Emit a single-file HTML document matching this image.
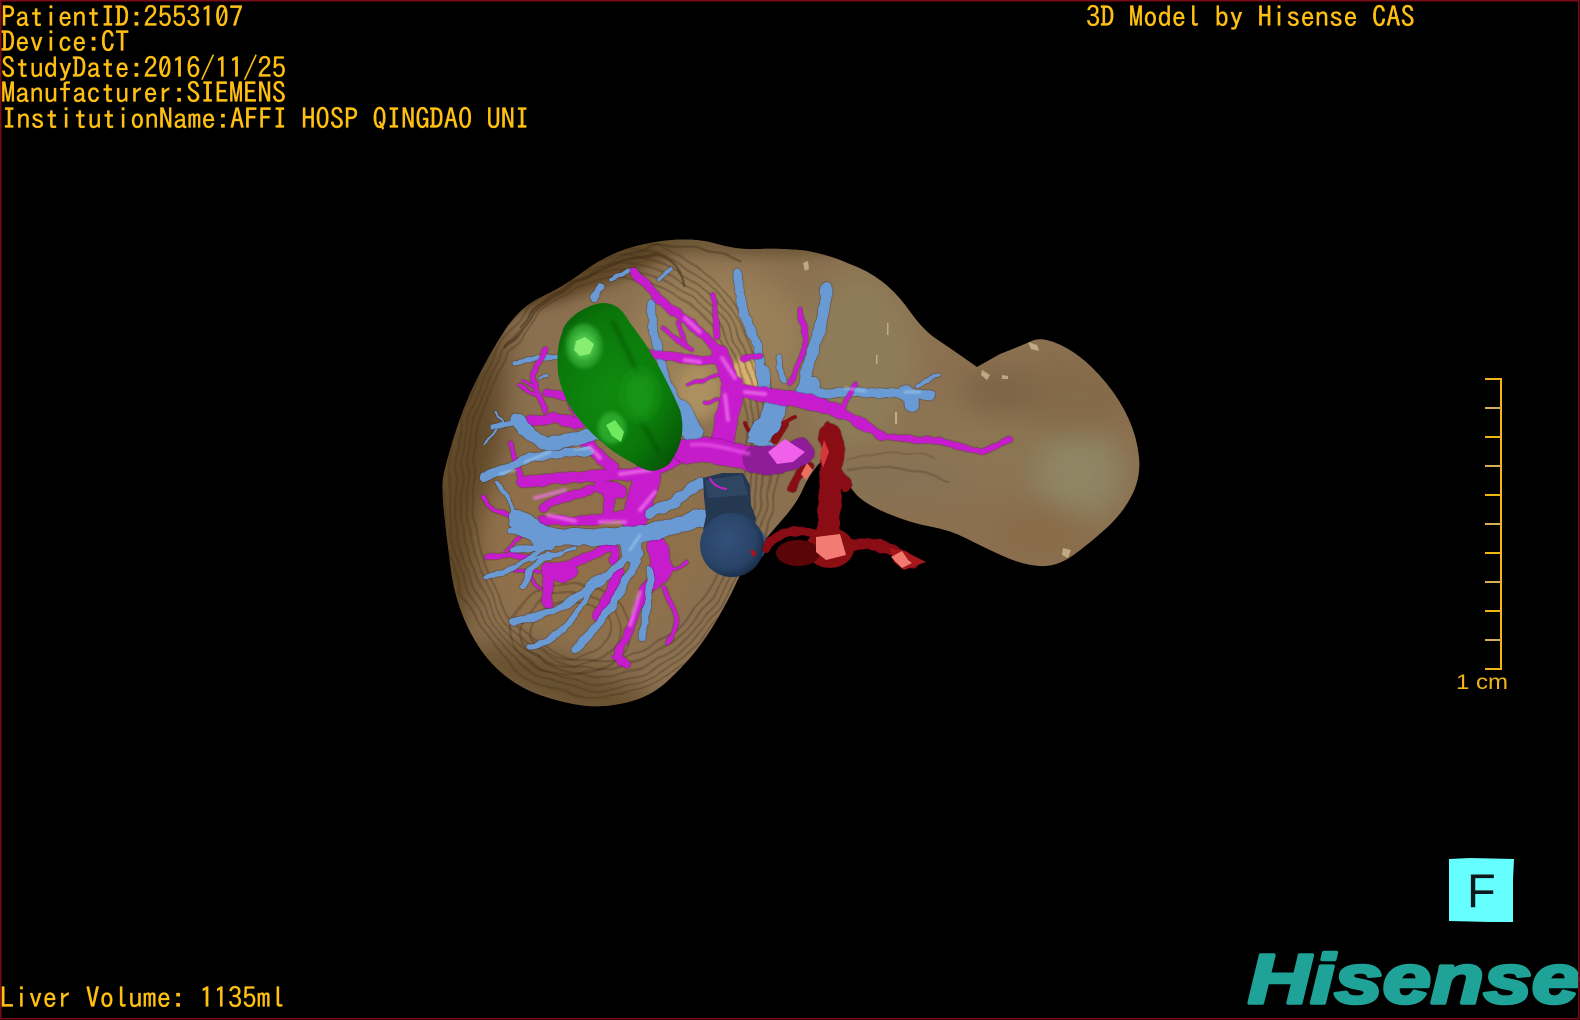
<!DOCTYPE html>
<html><head><meta charset="utf-8"><title>3D Model</title>
<style>
html,body{margin:0;padding:0;background:#000;width:1580px;height:1020px;overflow:hidden}
svg{display:block;position:absolute;left:0;top:0}
.t{font-family:"IPAGothic","Liberation Mono",monospace;font-size:28.5px;fill:#ffc012;stroke:#ffc012;stroke-width:.3px}
.v path{fill:none;stroke-linecap:round;stroke-linejoin:round}
</style></head><body>
<svg width="1580" height="1020" viewBox="0 0 1580 1020" xmlns="http://www.w3.org/2000/svg">
<defs>
<path id="lv" d="M805 250.5Q780 248 758.5 249Q737 250 717 244Q697 238 672 240Q647 242 625 249.5Q603 257 583 272Q563 287 541.5 297Q520 307 505 330Q490 353 476.5 380Q463 407 453 440Q443 473 442.5 483Q442 493 444.5 516.5Q447 540 451 570Q455 600 467.5 626.5Q480 653 498.5 670Q517 687 540 695Q563 703 583 705.5Q603 708 626.5 702.5Q650 697 666.5 682Q683 667 695 652Q707 637 718.5 617Q730 597 736.5 582.5Q743 568 755 552.5Q767 537 782 520Q797 503 802.5 490Q808 477 817 466Q826 455 836.5 469Q847 483 855 493Q863 503 886.5 513Q910 523 930 526.5Q950 530 966.5 538.5Q983 547 1003 556Q1023 565 1040 566Q1057 567 1073.5 555Q1090 543 1106.5 528Q1123 513 1132 495Q1141 477 1139 457Q1137 437 1128.5 418.5Q1120 400 1106.5 383.5Q1093 367 1080 357Q1067 347 1053.5 342Q1040 337 1031.5 341Q1023 345 1000 354L977 367L963.5 357.5Q950 348 936.5 339Q923 330 910 311.5Q897 293 882 281.5Q867 270 848.5 263.5Q830 255 805 250.5Z"/>
<clipPath id="lc"><use href="#lv"/></clipPath>
<filter id="b14" x="-40%" y="-40%" width="180%" height="180%"><feGaussianBlur stdDeviation="14"/></filter>
<filter id="b6" x="-40%" y="-40%" width="180%" height="180%"><feGaussianBlur stdDeviation="6"/></filter>
<filter id="b2" x="-40%" y="-40%" width="180%" height="180%"><feGaussianBlur stdDeviation="2"/></filter>
<filter id="b1" filterUnits="userSpaceOnUse" x="0" y="0" width="1580" height="1020"><feGaussianBlur stdDeviation="1"/></filter>
<filter id="edge" filterUnits="userSpaceOnUse" x="0" y="0" width="1580" height="1020">
<feTurbulence type="fractalNoise" baseFrequency=".08" numOctaves="2" seed="4" result="n"/>
<feDisplacementMap in="SourceGraphic" in2="n" scale="5" xChannelSelector="R" yChannelSelector="G" result="d"/>
<feDropShadow in="d" dx="0" dy="0" stdDeviation="0.8" flood-color="#1a1020" flood-opacity="0.9"/></filter>
<filter id="wav" filterUnits="userSpaceOnUse" x="0" y="0" width="1580" height="1020">
<feTurbulence type="fractalNoise" baseFrequency=".03" numOctaves="2" seed="7" result="n"/>
<feDisplacementMap in="SourceGraphic" in2="n" scale="10" xChannelSelector="R" yChannelSelector="G"/></filter>
<radialGradient id="gr" gradientUnits="userSpaceOnUse" cx="610" cy="390" r="130" gradientTransform="translate(610 390) rotate(30) scale(.75 1.15) translate(-610 -390)">
<stop offset="0" stop-color="#0f8a0f"/><stop offset=".6" stop-color="#0a760a"/><stop offset="1" stop-color="#055005"/></radialGradient>
<radialGradient id="sp" cx=".42" cy=".42" r=".62"><stop offset="0" stop-color="#32507a"/><stop offset=".7" stop-color="#2a4468"/><stop offset="1" stop-color="#182c48"/></radialGradient>
</defs>

<rect width="1580" height="1020" fill="#000"/>

<!-- liver -->
<use href="#lv" fill="#8b7050"/>
<g clip-path="url(#lc)">
<ellipse cx="462" cy="480" rx="34" ry="190" fill="#5e4628" filter="url(#b14)" transform="rotate(8 462 480)"/>
<ellipse cx="560" cy="685" rx="110" ry="26" fill="#66502e" filter="url(#b14)" transform="rotate(18 560 685)"/>
<ellipse cx="600" cy="268" rx="120" ry="18" fill="#5e4628" filter="url(#b6)" transform="rotate(-22 600 268)"/>
<ellipse cx="760" cy="245" rx="110" ry="12" fill="#6e5838" filter="url(#b6)"/>
<ellipse cx="720" cy="340" rx="90" ry="70" fill="#9a8058" filter="url(#b14)"/>
<ellipse cx="590" cy="540" rx="110" ry="100" fill="#8f7048" filter="url(#b14)"/>
<ellipse cx="860" cy="360" rx="60" ry="90" fill="#8e7c58" filter="url(#b14)"/>
<ellipse cx="1000" cy="440" rx="110" ry="55" fill="#8c7452" filter="url(#b14)"/>
<ellipse cx="1080" cy="475" rx="45" ry="45" fill="#908c6a" opacity=".75" filter="url(#b14)"/>
<ellipse cx="1075" cy="395" rx="60" ry="35" fill="#846a48" filter="url(#b14)"/>
<ellipse cx="1040" cy="535" rx="50" ry="24" fill="#8a6c48" filter="url(#b14)"/>
<ellipse cx="900" cy="480" rx="70" ry="20" fill="#857254" filter="url(#b14)"/>
<ellipse cx="1000" cy="392" rx="40" ry="22" fill="#7c6444" filter="url(#b14)"/>
<ellipse cx="745" cy="378" rx="16" ry="20" fill="#d8b070" filter="url(#b2)"/>
<ellipse cx="698" cy="392" rx="22" ry="28" fill="#ac9060" filter="url(#b6)"/>
<g fill="none" stroke="#3e2c16" stroke-opacity=".3" stroke-width="2.2" filter="url(#wav)">
<ellipse cx="610" cy="470" rx="166" ry="228" transform="rotate(8 610 470)"/>
<ellipse cx="610" cy="470" rx="160" ry="221" transform="rotate(8 610 470)"/>
<ellipse cx="610" cy="470" rx="154" ry="214" transform="rotate(8 610 470)"/>
<ellipse cx="610" cy="470" rx="148" ry="207" transform="rotate(8 610 470)"/>
<ellipse cx="610" cy="470" rx="142" ry="200" transform="rotate(8 610 470)"/>
<ellipse cx="610" cy="470" rx="136" ry="193" transform="rotate(8 610 470)"/>
<ellipse cx="570" cy="630" rx="60" ry="45"/><ellipse cx="570" cy="630" rx="50" ry="37"/><ellipse cx="570" cy="630" rx="40" ry="29"/>
<path d="M505 350C540 300 590 270 640 258C670 250 680 270 685 285" stroke-opacity=".5" stroke-width="2.5"/>
<path d="M520 325C560 285 610 262 650 248C690 240 720 255 740 262" stroke-opacity=".4" stroke-width="2.5"/>
<path d="M848 470C880 462 920 470 950 480" stroke-opacity=".25"/>
<path d="M850 460C880 450 910 452 935 458" stroke-opacity=".18"/>
</g>
<g fill="#d8c49c" opacity=".7">
<path d="M1028 342l9 3 2 6-8-2zM982 370l8 5-3 5-6-5zM1063 548l8 2-3 8-6-3zM803 263l5-2 1 8-4 2zM1002 375l6 1 0 3-6 0z"/>
<rect x="887" y="323" width="1.5" height="12"/><rect x="895" y="412" width="2" height="12"/><rect x="876" y="355" width="1.5" height="9"/>
</g>
</g>

<!-- red small behind -->
<g class="v">
<path d="M745 423C748 433 755 437 763 437C772 438 778 432 784 424C788 420 792 418 795 417" stroke="#861014" stroke-width="4"/>
<path d="M775 440L785 424" stroke="#861014" stroke-width="8"/>
</g>

<!-- blue behind -->
<g class="v" stroke="#6a9ad4" filter="url(#edge)">
<path d="M652 303C650 315 652 325 654 333C658 350 662 365 667 380C673 395 680 408 687 420" stroke-width="8"/>
<path d="M681 410L693 434" stroke-width="20"/>
<path d="M737 273L740 295L744 315L757 345L763 383" stroke-width="9"/>
<path d="M763 370L764 392" stroke-width="12"/>
<path d="M826 290C826 300 824 315 818 335C812 352 807 370 803 388" stroke-width="11"/>
<path d="M826 288V298" stroke-width="10"/>
<path d="M778 357L781 370L784 380" stroke-width="5"/>
<path d="M777 402L770 422L760 435" stroke-width="22"/>
<path d="M770 446L750 440" stroke-width="5"/>
<path d="M817 393C830 394 845 391 860 392C875 393 892 394 907 394C918 394 925 395 930 396" stroke-width="9"/>
<path d="M905 392C912 396 912 402 913 405" stroke-width="14"/>
<path d="M918 385L938 375" stroke-width="4"/>
<path d="M812 385L806 392" stroke-width="18"/>
<path d="M558 357L535 358L515 363" stroke-width="5"/>
<path d="M633 270L610 279" stroke-width="3.5"/>
<path d="M601 286L594 298" stroke-width="7"/>
<path d="M670 268L660 280" stroke-width="3.5"/>
<path d="M547 376L540 379" stroke-width="3"/>
</g>

<!-- magenta -->
<g class="v" stroke="#c71fce" filter="url(#edge)">
<path d="M723 437C726 420 732 405 733 387" stroke-width="22"/>
<path d="M733 387C730 372 726 362 720 353C710 341 700 332 690 323C680 315 668 307 657 297C650 288 642 280 633 272" stroke-width="8"/>
<path d="M733 390C729 375 725 365 720 353" stroke-width="16"/>
<path d="M735 390C750 391 765 395 780 397C795 399 815 402 840 412" stroke-width="14"/>
<path d="M840 412C855 422 868 430 883 436C900 440 920 438 940 441C955 445 970 450 983 452C990 448 1000 444 1010 440" stroke-width="6"/>
<path d="M840 412L883 436" stroke-width="9"/>
<path d="M647 353C662 355 675 357 690 360C703 362 712 360 722 357" stroke-width="8"/>
<path d="M713 295C716 310 716 325 717 337" stroke-width="5"/>
<path d="M663 328L675 338L692 350M678 322L686 345" stroke-width="4"/>
<path d="M688 384L705 380L722 372M705 403L718 400" stroke-width="3"/>
<path d="M800 310C803 325 806 335 805 347C800 360 795 370 790 383" stroke-width="5"/>
<path d="M855 385L843 407" stroke-width="4"/>
<path d="M744 358L750 357M754 357L760 356" stroke-width="6"/>
<path d="M677 460C665 466 655 470 643 473C620 476 596 476 573 477C555 479 538 481 523 482" stroke-width="11"/>
<path d="M523 482C517 470 515 455 510 443" stroke-width="5"/>
<path d="M587 443C595 452 602 460 612 467" stroke-width="12"/>
<path d="M648 474C644 490 640 505 634 518" stroke-width="26"/>
<path d="M643 510L600 520L570 521L543 520" stroke-width="9"/>
<path d="M590 490L565 497L543 507" stroke-width="9"/>
<path d="M604 488L610 498L608 515" stroke-width="9"/>
<path d="M600 487L620 492" stroke-width="14"/>
<path d="M545 350C538 365 532 372 533 380C538 392 541 402 545 410" stroke-width="5"/>
<path d="M547 393L570 397C574 410 577 417 582 424" stroke-width="8"/>
<path d="M530 421L555 418L575 424" stroke-width="10"/>
<path d="M523 380L537 390M535 395L520 385" stroke-width="3"/>
<path d="M657 547C659 555 663 565 661 573" stroke-width="20"/>
<path d="M661 575C652 582 645 590 642 598C636 615 630 630 625 640C620 648 617 654 618 657L628 665" stroke-width="7"/>
<path d="M661 575L645 590" stroke-width="12"/>
<path d="M663 587C670 600 675 610 677 620C675 630 672 637 667 642" stroke-width="4"/>
<path d="M668 572L687 562" stroke-width="3"/>
<path d="M612 543C615 550 615 555 613 560" stroke-width="9"/>
<path d="M612 545C600 552 590 556 580 560C570 565 558 568 550 570C547 580 548 590 547 603" stroke-width="9"/>
<path d="M550 570C560 575 565 575 570 572" stroke-width="15"/>
<path d="M618 572C612 590 605 605 597 616" stroke-width="11"/>
<path d="M487 558L510 555L533 557" stroke-width="5"/>
<path d="M507 550L527 530" stroke-width="3"/>
<path d="M483 498L495 510L513 518" stroke-width="4"/>
<path d="M515 570L540 572M530 575L540 590" stroke-width="3"/>
<path d="M620 665L612 655" stroke-width="2"/>
</g>

<!-- blue over -->
<g class="v" stroke="#6a9ad4" filter="url(#edge)">
<path d="M703 517C690 522 670 528 650 532C620 538 590 537 560 537C545 537 530 528 517 518" stroke-width="17"/>
<path d="M520 522L547 540" stroke-width="21"/>
<path d="M515 518L507 495L497 483" stroke-width="4"/>
<path d="M630 540L632 553" stroke-width="20"/>
<path d="M628 555C615 570 603 578 590 587C578 597 568 603 560 607C545 614 530 618 513 622" stroke-width="7"/>
<path d="M600 580L590 587" stroke-width="11"/>
<path d="M592 590C580 608 572 620 563 630C552 638 542 644 530 647" stroke-width="6"/>
<path d="M636 562C628 575 622 590 615 600C607 615 590 635 575 650" stroke-width="8"/>
<path d="M650 570C650 585 648 600 646 615C645 625 643 630 642 637" stroke-width="7"/>
<path d="M543 547L513 550" stroke-width="6"/>
<path d="M545 548L520 563L505 572L487 577" stroke-width="5"/>
<path d="M548 555L530 570L523 587" stroke-width="6"/>
<path d="M510 530L530 535" stroke-width="5"/>
<path d="M560 552L530 560M545 560L575 548" stroke-width="3"/>
<path d="M650 513C660 508 670 507 680 497C688 491 694 487 700 483" stroke-width="11"/>
<path d="M597 433C580 438 565 442 547 444C535 440 525 430 517 420" stroke-width="13"/>
<path d="M517 422L493 427" stroke-width="5"/>
<path d="M590 451C570 452 550 455 530 457C515 466 500 472 483 477" stroke-width="8"/>
<path d="M495 412L505 425M484 443L497 430" stroke-width="2"/>
</g>
<g class="v" stroke="#a8d4f4" stroke-width="2.5" opacity=".6" filter="url(#b1)">
<path d="M525 462L550 452M575 449L590 448M845 388L865 391M905 392L920 392M640 535L630 550M500 474L515 470"/>
</g>
<g class="v" stroke="#f278ec" stroke-width="4" opacity=".7" filter="url(#b1)">
<path d="M725 395L728 420M735 378L722 358M700 332L685 318M745 392L765 394M700 362L685 360M655 492L640 510M625 522L600 522M650 470L620 474M590 447L600 458M640 592L630 625M548 515L575 521M535 498L565 490"/>
</g>

<!-- main portal trunk -->
<g class="v" filter="url(#edge)">
<path d="M685 452C705 447 725 452 745 458C760 460 775 460 790 456" stroke="#c41fc8" stroke-width="24"/>
<path d="M755 460C770 463 785 459 800 452" stroke="#8f1c98" stroke-width="27"/>
</g>
<path class="v" d="M690 445C710 442 730 450 750 454" stroke="#ea55ec" stroke-width="4" fill="none" opacity=".7" filter="url(#b1)"/>
<path d="M768 452L785 439L797 447L805 452L793 462L777 464Z" fill="#f060ea"/>

<!-- green tumour -->
<path d="M603 303C595 303 585 308 577 313C568 320 563 326 562 333C557 345 557 360 558 373C560 386 565 397 570 407C580 422 592 434 603 443C613 452 623 458 633 463C640 468 647 471 653 471C660 470 666 467 670 463C677 453 681 443 682 433C683 425 682 417 680 410C674 395 665 378 657 363C648 347 638 333 630 323C626 316 622 310 617 307C612 304 608 303 603 303Z" fill="url(#gr)"/>
<g fill="none" stroke="#044a04" stroke-opacity=".55">
<path d="M612 320C625 345 635 370 650 395" stroke-width="4" filter="url(#b2)"/>
<path d="M640 420C650 435 655 445 660 455" stroke-width="4" filter="url(#b2)"/>
</g>
<ellipse cx="584" cy="346" rx="18" ry="22" fill="#2ea42e" filter="url(#b2)"/>
<ellipse cx="584" cy="346" rx="12" ry="14" fill="#48c248" filter="url(#b2)"/>
<path d="M576 341L585 337L594 344L590 354L580 356L574 350Z" fill="#88ee70"/>
<ellipse cx="612" cy="428" rx="14" ry="16" fill="#2ca82c" filter="url(#b2)"/>
<path d="M606 425L615 420L624 432L621 442L612 436Z" fill="#70e860"/>
<ellipse cx="640" cy="395" rx="18" ry="26" fill="#159415" filter="url(#b6)"/>

<!-- navy -->
<path d="M703 478L722 473L743 473L750 485L751 505L756 518L754 530L703 530L706 516L704 497Z" fill="#253852"/>
<path d="M705 480L742 475L748 495L708 498Z" fill="#2e4662"/>
<path d="M742 525C765 522 772 545 762 557C752 566 742 562 738 556Z" fill="#35578a"/>
<circle cx="732" cy="545" r="32" fill="url(#sp)"/>
<path d="M756 553L754 550L750 551L754 558Z" fill="#b01018"/>
<path d="M710 478C712 484 718 488 727 489" stroke="#c71fce" stroke-width="2" fill="none"/>

<!-- red vessels -->
<g class="v" stroke="#8a0e12" filter="url(#edge)">
<path d="M830 435C834 445 834 452 832 462C829 475 830 490 830 505C829 520 828 530 830 545" stroke-width="22"/>
<path d="M830 455L838 475L846 485" stroke-width="12"/>
<path d="M827 425V440" stroke-width="5"/>
<path d="M828 537C815 532 798 530 783 533C776 537 770 543 767 549" stroke-width="9"/>
<path d="M847 545C862 543 878 544 890 549C898 553 905 558 912 562" stroke-width="11"/>
<path d="M792 488L800 472L810 466" stroke-width="8"/>
</g>
<ellipse cx="830" cy="548" rx="24" ry="20" fill="#8a0e12"/>
<ellipse cx="798" cy="553" rx="22" ry="13" fill="#5a0608"/>
<path d="M816 537L840 534L846 555L826 560L816 552Z" fill="#f27c74"/>
<path d="M890 548L906 552L926 562L904 570L894 562Z" fill="#a5171b"/>
<path d="M891 557L902 551L908 560L912 563L902 568Z" fill="#f07a70"/>
<path d="M807 463L813 470L806 480L801 474Z" fill="#e8705e"/>
<path d="M824 440L829 452L823 468L820 455Z" fill="#d4383a"/>

<!-- text -->
<text class="t" x="1" y="27">PatientID:2553107</text>
<text class="t" x="1" y="52">Device:CT</text>
<text class="t" x="1" y="78">StudyDate:2016/11/25</text>
<text class="t" x="1" y="103">Manufacturer:SIEMENS</text>
<text class="t" x="2" y="129">InstitutionName:AFFI HOSP QINGDAO UNI</text>
<text class="t" x="1086" y="27" style="font-size:28.6px">3D Model by Hisense CAS</text>
<text class="t" x="0" y="1008">Liver Volume: 1135ml</text>

<!-- ruler -->
<g fill="none" stroke="#f2b515" stroke-width="2">
<path d="M1485 379H1501V669H1485M1485 437H1501M1485 495H1501M1485 553H1501M1485 611H1501"/>
<path d="M1485 408H1501M1485 466H1501M1485 524H1501M1485 582H1501M1485 640H1501" stroke="#d8ae58"/>
</g>
<text x="1456" y="689" font-family="Liberation Sans, sans-serif" font-size="21" fill="#f2b515" textLength="52" lengthAdjust="spacingAndGlyphs">1 cm</text>

<!-- F cube -->
<path d="M1449 859L1470 858L1514 859L1513 880L1513 922L1490 922L1449 921Z" fill="#66ffff"/>
<text x="1467" y="907" font-family="Liberation Sans, sans-serif" font-size="47" fill="#0a1a1c">F</text>

<!-- logo -->
<text x="1248" y="1003" font-family="Liberation Sans, sans-serif" font-weight="bold" font-style="italic" font-size="70" fill="#1fa398" stroke="#1fa398" stroke-width="3.5" stroke-linejoin="round" textLength="332" lengthAdjust="spacingAndGlyphs">Hisense</text>

<!-- border -->
<rect x="0.75" y="0.75" width="1578" height="1018" fill="none" stroke="#7a0c16" stroke-width="1.5"/>
</svg>
</body></html>
